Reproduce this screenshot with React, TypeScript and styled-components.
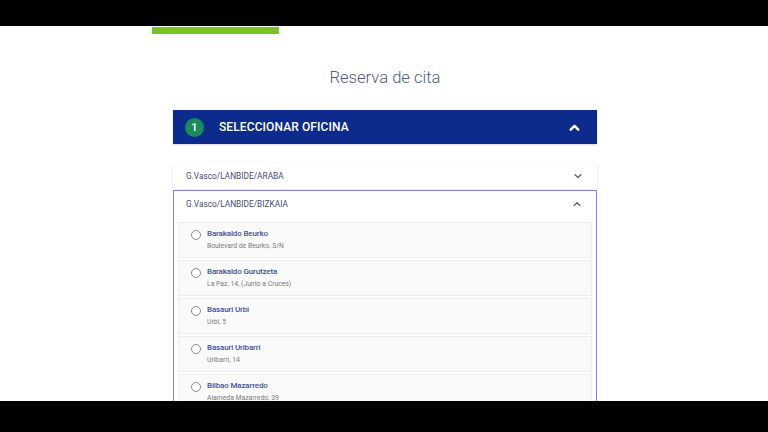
import React from "react";
import styled, { createGlobalStyle } from "styled-components";

const GlobalStyle = createGlobalStyle`
  html, body { margin: 0; padding: 0; background: #000; }
  body { font-family: Roboto, "Noto Sans", Arial, sans-serif; }
  * { box-sizing: border-box; }
`;

const Screen = styled.div`
  width: 768px;
  height: 432px;
  display: flex;
  flex-direction: column;
  background: #000;
  overflow: hidden;
`;

const Band = styled.div<{ $h: number }>`
  height: ${(p) => p.$h}px;
  flex: 0 0 ${(p) => p.$h}px;
  background: #000;
`;

const Viewport = styled.div`
  flex: 1 1 auto;
  background: #fff;
  overflow: hidden;
  display: flex;
  flex-direction: column;
`;

const ProgressTrack = styled.div`
  padding-left: 152px;
  margin-top: 1px;
  height: 7px;
  flex: 0 0 7px;
`;

const ProgressFill = styled.div`
  width: 127px;
  height: 7px;
  background: #79c21f;
`;

const PageTitle = styled.h1`
  margin: 32px 0 0;
  text-align: center;
  font-family: Roboto, Arial, sans-serif;
  font-weight: 300;
  font-size: 16.6px;
  line-height: 24px;
  color: #4d5c88;
  padding-left: 2px;
`;

const Main = styled.div`
  width: 424px;
  margin: 20px 0 0 173px;
  display: flex;
  flex-direction: column;
`;

const StepHeader = styled.div`
  height: 34px;
  background: #0c2b8c;
  display: flex;
  align-items: center;
  padding: 0 16px 0 12px;
  box-shadow: 0 1px 2px rgba(0, 0, 0, 0.15);
`;

const StepBadge = styled.span`
  width: 19px;
  height: 19px;
  border-radius: 50%;
  background: #1b8a5c;
  color: #fff;
  font-size: 11px;
  font-weight: 500;
  display: flex;
  align-items: center;
  justify-content: center;
`;

const StepTitle = styled.span`
  margin-left: 15px;
  flex: 1;
  color: #fff;
  font-size: 12px;
  font-weight: 500;
  letter-spacing: 0.1px;
`;

const GroupRow = styled.div`
  margin-top: 19px;
  height: 26px;
  background: #fff;
  box-shadow: 0 1px 3px rgba(0, 0, 0, 0.12);
  display: flex;
  align-items: center;
  padding: 0 14px 0 13px;
`;

const GroupLabel = styled.span`
  flex: 1;
  font-size: 8.3px;
  color: #3f4c78;
`;

const Panel = styled.div`
  margin-top: 1px;
  border: 1px solid #8884d6;
  border-bottom: none;
  padding: 0 4px;
  display: flex;
  flex-direction: column;
  gap: 2px;
`;

const PanelHead = styled.div`
  height: 29px;
  display: flex;
  align-items: center;
  padding: 0 10px 3px 8px;
`;

const Office = styled.div`
  height: 36px;
  flex: 0 0 36px;
  background: #fafafa;
  border: 1px solid #ededed;
  display: grid;
  grid-template-columns: 10px 1fr;
  column-gap: 6px;
  align-content: start;
  padding: 5px 0 0 12px;
`;

const Radio = styled.span`
  width: 10px;
  height: 10px;
  margin-top: 2px;
  border-radius: 50%;
  border: 1px solid #8a8a8a;
  background: #fff;
`;

const OfficeText = styled.div`
  display: flex;
  flex-direction: column;
`;

const OfficeName = styled.span`
  font-size: 8px;
  line-height: 11px;
  font-weight: 500;
  letter-spacing: -0.15px;
  color: #44529c;
`;

const OfficeAddr = styled.span`
  margin-top: 2px;
  font-size: 6.8px;
  line-height: 10px;
  color: #7a7a7a;
`;

const Chevron = ({ up, color, size, weight }: { up?: boolean; color: string; size: number; weight: number }) => (
  <svg width={size} height={size} viewBox="0 0 12 12" fill="none">
    <path
      d={up ? "M2.5 8 L6 4.5 L9.5 8" : "M2.5 4.5 L6 8 L9.5 4.5"}
      stroke={color}
      strokeWidth={weight}
      strokeLinecap="round"
      strokeLinejoin="round"
    />
  </svg>
);

const offices = [
  { name: "Barakaldo Beurko", addr: "Boulevard de Beurko, S/N" },
  { name: "Barakaldo Gurutzeta", addr: "La Paz, 14, (Junto a Cruces)" },
  { name: "Basauri Urbi", addr: "Urbi, 5" },
  { name: "Basauri Uribarri", addr: "Uribarri, 14" },
  { name: "Bilbao Mazarredo", addr: "Alameda Mazarredo, 39" },
];

export default function App() {
  return (
    <>
      <GlobalStyle />
      <Screen>
        <Band $h={26} />
        <Viewport>
          <ProgressTrack>
            <ProgressFill />
          </ProgressTrack>
          <PageTitle>Reserva de cita</PageTitle>
          <Main>
            <StepHeader>
              <StepBadge>1</StepBadge>
              <StepTitle>SELECCIONAR OFICINA</StepTitle>
              <Chevron up color="#fff" size={13} weight={2.2} />
            </StepHeader>
            <GroupRow>
              <GroupLabel>G.Vasco/LANBIDE/ARABA</GroupLabel>
              <Chevron color="#555" size={10} weight={1.5} />
            </GroupRow>
            <Panel>
              <PanelHead>
                <GroupLabel>G.Vasco/LANBIDE/BIZKAIA</GroupLabel>
                <Chevron up color="#555" size={10} weight={1.5} />
              </PanelHead>
              {offices.map((o) => (
                <Office key={o.name}>
                  <Radio />
                  <OfficeText>
                    <OfficeName>{o.name}</OfficeName>
                    <OfficeAddr>{o.addr}</OfficeAddr>
                  </OfficeText>
                </Office>
              ))}
            </Panel>
          </Main>
        </Viewport>
        <Band $h={31} />
      </Screen>
    </>
  );
}
